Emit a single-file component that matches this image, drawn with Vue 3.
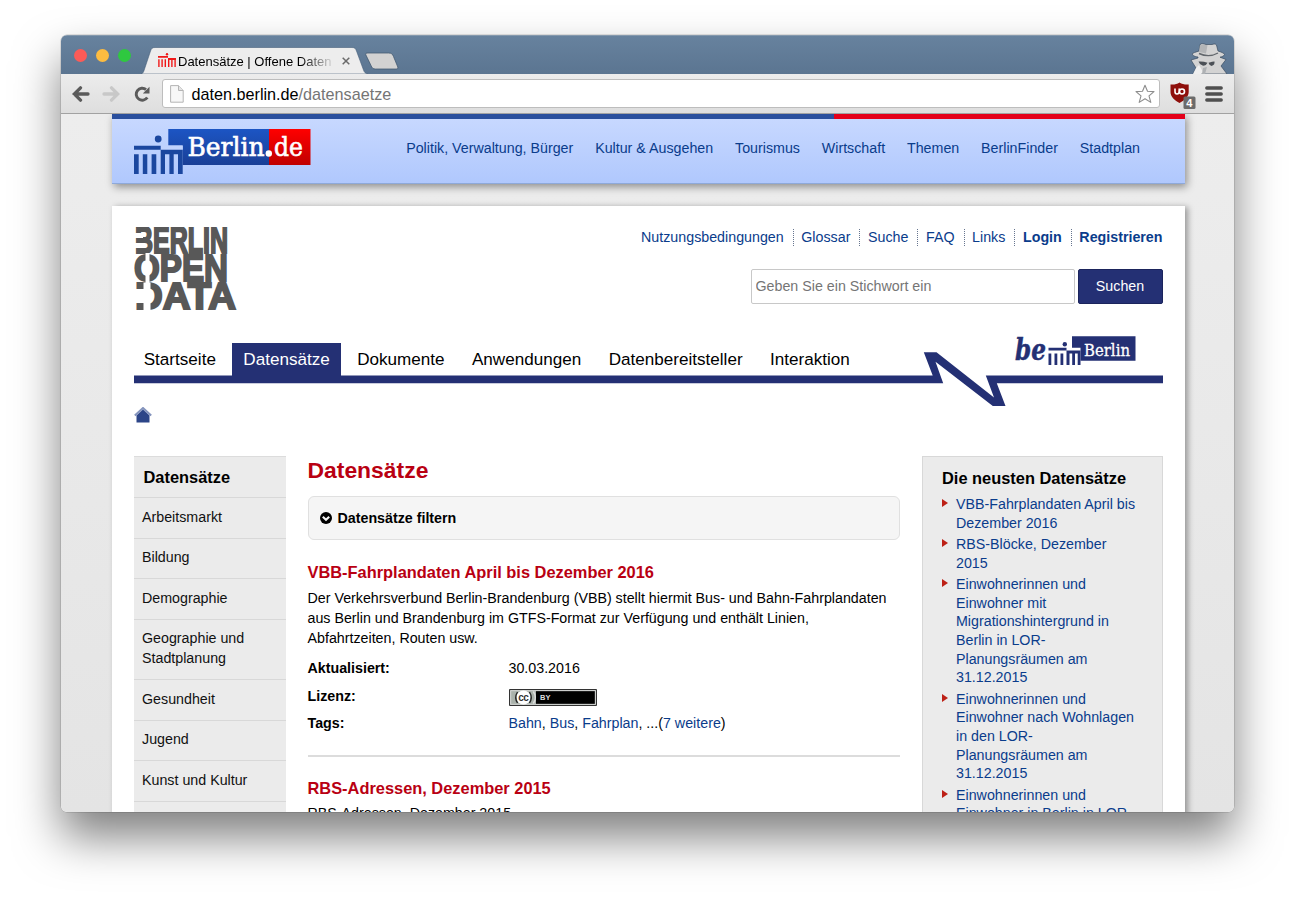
<script setup>
import { ref } from 'vue';

const query = ref('');
const activeTab = ref('Datensätze');

const portalLinks = [
  'Politik, Verwaltung, Bürger',
  'Kultur & Ausgehen',
  'Tourismus',
  'Wirtschaft',
  'Themen',
  'BerlinFinder',
  'Stadtplan'
];

const metaLinks = [
  { label: 'Nutzungsbedingungen' },
  { label: 'Glossar' },
  { label: 'Suche' },
  { label: 'FAQ' },
  { label: 'Links' },
  { label: 'Login', strong: true },
  { label: 'Registrieren', strong: true }
];

const tabs = ['Startseite', 'Datensätze', 'Dokumente', 'Anwendungen', 'Datenbereitsteller', 'Interaktion'];

const categories = [
  'Arbeitsmarkt',
  'Bildung',
  'Demographie',
  'Geographie und Stadtplanung',
  'Gesundheit',
  'Jugend',
  'Kunst und Kultur',
  'Öffentliche Verwaltung'
];

const newest = [
  'VBB-Fahrplandaten April bis Dezember 2016',
  'RBS-Blöcke, Dezember 2015',
  'Einwohnerinnen und Einwohner mit Migrationshintergrund in Berlin in LOR-Planungsräumen am 31.12.2015',
  'Einwohnerinnen und Einwohner nach Wohnlagen in den LOR-Planungsräumen am 31.12.2015',
  'Einwohnerinnen und Einwohner in Berlin in LOR-Planungsräumen am 31.12.2015'
];
</script>

<template>
  <div class="desktop">
    <div class="window">
      <div class="titlebar">
        <div class="lights">
          <span class="light red"></span>
          <span class="light yellow"></span>
          <span class="light green"></span>
        </div>
        <div class="tab">
          <svg class="tab-shape" width="228" height="27" viewBox="0 0 228 27">
            <path d="M0 27 C2 26.5 2.5 25 3.2 23 L9.5 4 C10.5 1.2 11.5 .5 14 .5 H211 C213.5 .5 214.5 1.2 215.5 4 L222.5 23 C223.3 25.5 224.5 26.5 227 27 Z" fill="#ededed" stroke="#47607a" stroke-width=".6" />
          </svg>
          <svg class="favicon" width="18" height="15" viewBox="0 0 18 15" fill="#f01818">
            <circle cx="9" cy="1.3" r="1.2" />
            <path d="M0 3h10v1.700H0zM10 5h8v2h-8zM.2 6.200h1.400V14H.2zM3.400 6.200h1.400V14H3.400zM6.600 6.200H8V14H6.600zM10 6h1.400v8H10zM13.200 6h1.400v8h-1.400zM16.400 6h1.400v8h-1.400z" />
          </svg>
          <span class="tab-title">Datensätze | Offene Daten | B</span>
          <svg class="tab-close" width="8" height="8" viewBox="0 0 8 8">
            <path d="M.7.7l6.600 6.600M7.300.7L.7 7.300" stroke="#6a6a6a" stroke-width="1.5" />
          </svg>
        </div>
        <svg class="new-tab" width="36" height="18" viewBox="0 0 36 18">
          <path d="M4 1 H24.5 C27.5 1 28.5 2 29.5 4.5 L33.8 15 C34.2 16.5 33.5 17 32 17 H11.5 C9 17 8 16 7 13.5 L1.8 2.8 C1.3 1.5 2 1 4 1 Z" fill="#d2d2d2" stroke="#445a72" stroke-width=".8" />
        </svg>
        <svg class="incognito" width="38" height="31" viewBox="0 0 38 31">
          <path d="M3 31 L6 25 L1 17 L8 15 V14 C4 13.5 2 12 2.5 10.5 C5 9 8 8.5 9 8 L10 1.5 C12 0 14 1 16 1.5 H22 C24 .8 25.5 .7 26.5 2 L28 8 C31 9 34 10 34.5 11.5 C34 13 32 13.8 30 14.2 L36 16.5 L31 23 L37 31 Z" fill="#d3d3d3" stroke="#394c60" stroke-width=".7" />
          <path d="M10 2 L9 9 L16 10.5 L17.500 2Z" fill="#b3b5b7" />
          <path d="M9 10.500 Q19 15 28 10" fill="none" stroke="#62676c" stroke-width="1.4" />
          <path d="M8.500 18.500 Q13 18 17.500 19.800 Q16 23.300 12.500 22.500 Q9.500 21.500 8.500 18.500ZM18.500 19.800 Q24 18 24.500 18.500 Q25 22 21.500 23 Q19 22 18.500 19.800Z" fill="#4b5056" />
          <path d="M6 25 L9 22 L13 29 L11 31 H3Z" fill="#efefef" />
          <path d="M13 25 L17 24 L15 31 H12Z" fill="#aeb1b4" />
        </svg>
      </div>

      <div class="toolbar">
        <svg width="18" height="16" viewBox="0 0 18 16" class="nav-icon">
          <path d="M8.500 1.800 L2.300 8 L8.500 14.200 M2.500 8 H16" fill="none" stroke="#5b5b5b" stroke-width="3.3" stroke-linecap="round" />
        </svg>
        <svg width="18" height="16" viewBox="0 0 18 16" class="nav-icon forward">
          <path d="M9.500 1.800 L15.700 8 L9.500 14.200 M15.500 8 H2" fill="none" stroke="#c8c8c8" stroke-width="3.3" stroke-linecap="round" />
        </svg>
        <svg width="17" height="16" viewBox="0 0 17 16" class="nav-icon reload">
          <path d="M13.300 11.500 A6 6 0 1 1 12 3.500" fill="none" stroke="#5b5b5b" stroke-width="2.9" />
          <path d="M15.500 .8 V7.500 H8.800 Z" fill="#5b5b5b" />
        </svg>
        <div class="omnibox">
          <svg width="14" height="18" viewBox="0 0 14 18">
            <path d="M.6.6 H8.500 L13.200 5.500 V17.200 H.6 Z" fill="#f7f7f7" stroke="#b4b4b4" />
            <path d="M8.500.6 V5.500 H13.200" fill="#e4e4e4" stroke="#b4b4b4" />
          </svg>
          <span class="url">daten.berlin.de<span class="path">/datensaetze</span></span>
          <svg class="star" width="20" height="20" viewBox="0 0 20 20">
            <path d="M10 1.200 L12.500 7.300 L19 7.600 L14 11.900 L15.800 18.400 L10 14.800 L4.200 18.400 L6 11.900 L1 7.600 L7.500 7.300 Z" fill="#fff" stroke="#8d8d8d" stroke-width="1.1" stroke-linejoin="round" />
          </svg>
        </div>
        <svg class="ublock" width="27" height="28" viewBox="0 0 27 28">
          <path d="M9.500 .5 C12 2.300 15.500 2.800 18.700 2.500 V10 C18.700 15 14 18.500 9.500 21 C5 18.500 .5 15 .5 10 V2.500 C4 2.800 7 2.300 9.500 .5Z" fill="#8e0f0b" />
          <path d="M5 6.500 V9.500 Q5 12 7 12 Q9.200 12 9.200 9.500 V6.500" fill="none" stroke="#fff" stroke-width="1.6" />
          <circle cx="12" cy="9.500" r="2.500" fill="none" stroke="#fff" stroke-width="1.6" />
          <rect x="13.500" y="14.500" width="12" height="12.500" rx="1.5" fill="#6b6b6b" />
          <text x="16.300" y="24.800" class="badge-text">4</text>
        </svg>
        <svg class="menu" width="18" height="16" viewBox="0 0 18 16">
          <path d="M1.800 2h14.400M1.800 8h14.400M1.800 14h14.400" stroke="#4f4f4f" stroke-width="3.4" stroke-linecap="round" />
        </svg>
      </div>

      <div class="page">
        <header class="portal">
          <svg class="berlin-logo" width="178" height="47" viewBox="0 0 178 47">
            <defs>
              <linearGradient id="logoBlue" x1="0" y1="0" x2="0" y2="1">
                <stop offset="0" stop-color="#1c55c4" />
                <stop offset="1" stop-color="#1a3f96" />
              </linearGradient>
              <linearGradient id="logoRed" x1="0" y1="0" x2="0" y2="1">
                <stop offset="0" stop-color="#ff0000" />
                <stop offset="1" stop-color="#c00000" />
              </linearGradient>
            </defs>
            <path d="M34.300 1H135.300V37H48.700V17.500H34.300Z" fill="url(#logoBlue)" />
            <rect x="135" y="1" width="41.500" height="36" fill="url(#logoRed)" />
            <path d="M27 17.500h21.700v4.300H27z" fill="#c0d2fd" />
            <g fill="#1b479f">
              <circle cx="24.200" cy="11" r="3.400" />
              <path d="M0 17.700h26.700v4H0zM0 26.300h4.700V46H0zM8.800 26.300h4.500V46H8.800zM17.600 26.300h4.700V46h-4.700zM26.700 21.800h22V46H44V26.300h-4.300V46h-4.300V26.300h-4.400V46h-4.300z" />
            </g>
            <text x="53.500" y="27.500" class="slab" textLength="77" lengthAdjust="spacingAndGlyphs">Berlin</text>
            <circle cx="134.800" cy="25.500" r="3.200" fill="#fff" />
            <text x="140" y="27.500" class="slab" textLength="29" lengthAdjust="spacingAndGlyphs">de</text>
          </svg>
          <nav class="portal-nav">
            <a v-for="link in portalLinks" :key="link">{{ link }}</a>
          </nav>
        </header>

        <div class="sheet">
          <div class="top">
            <svg class="open-data" width="104" height="84" viewBox="0 0 104 84">
              <g class="block-type">
                <text x="1" y="26" textLength="93" lengthAdjust="spacingAndGlyphs">BERLIN</text>
                <text x="0" y="54" textLength="94" lengthAdjust="spacingAndGlyphs">OPEN</text>
                <text x="1" y="82" textLength="101" lengthAdjust="spacingAndGlyphs">DATA</text>
              </g>
              <path d="M0 6h9v5H0zM0 16h9v5H0zM11.500 26h4v9h-4zM11.500 46h4v10h-4zM0 62h10v14H0zM9.500 55.500h7V84h-7z" fill="#fff" />
            </svg>
            <div class="tools">
              <ul class="meta-links">
                <li v-for="link in metaLinks" :key="link.label" :class="{ strong: link.strong }">{{ link.label }}</li>
              </ul>
              <form class="search" @submit.prevent>
                <input v-model="query" type="text" placeholder="Geben Sie ein Stichwort ein">
                <button type="submit">Suchen</button>
              </form>
            </div>
          </div>

          <div class="main-nav">
            <svg class="nav-line" width="1029" height="72" viewBox="0 0 1029 72">
              <path d="M0 39.500 H798.700 L789.800 16.300 H802.500 L860 61.500 L851.800 39.500 H1029 V47.200 H862.800 L871.500 70 H858.800 L801.500 25.700 L809.200 47.200 H0 Z" fill="#243074" />
              <text x="881" y="24" class="be" textLength="31" lengthAdjust="spacingAndGlyphs">be</text>
              <g fill="#243074">
                <path d="M938 .3h63.500v24.500H946.500V11.800H938z" />
                <circle cx="930.800" cy="8.200" r="2.200" />
                <path d="M914.500 11.800h18v2.600h-18zM914.500 17.500h2.800V29h-2.800zM920.500 17.500h2.800V29h-2.800zM926.500 17.500h2.800V29h-2.800zM932.500 14.400h14V29h-2.800V17.500H941V29h-2.800V17.500h-2.700V29h-3z" />
              </g>
              <text x="950" y="19.500" class="slab small" textLength="46" lengthAdjust="spacingAndGlyphs">Berlin</text>
            </svg>
            <nav class="tabs">
              <a v-for="tab in tabs" :key="tab" :class="{ active: tab === activeTab }" @click="activeTab = tab">{{ tab }}</a>
            </nav>
          </div>

          <svg class="home" width="18" height="16" viewBox="0 0 18 16">
            <path d="M.8 8.500 L9 1 L17.200 8.500" fill="none" stroke="#8494bd" stroke-width="2" />
            <path d="M2.500 8.500 L9 2.500 L15.500 8.500 V15.500 H2.500 Z" fill="#2c4588" />
          </svg>

          <div class="columns">
            <aside class="categories">
              <h2>Datensätze</h2>
              <a v-for="category in categories" :key="category">{{ category }}</a>
            </aside>

            <main class="datasets">
              <h1>Datensätze</h1>
              <div class="filter">
                <svg width="12" height="12" viewBox="0 0 12 12">
                  <circle cx="6" cy="6" r="6" fill="#000" />
                  <path d="M2.800 4.700 L6 7.800 L9.200 4.700" fill="none" stroke="#f5f5f5" stroke-width="2.1" />
                </svg>
                <span>Datensätze filtern</span>
              </div>
              <article>
                <h3>VBB-Fahrplandaten April bis Dezember 2016</h3>
                <p>Der Verkehrsverbund Berlin-Brandenburg (VBB) stellt hiermit Bus- und Bahn-Fahrplandaten aus Berlin und Brandenburg im GTFS-Format zur Verfügung und enthält Linien, Abfahrtzeiten, Routen usw.</p>
                <dl>
                  <dt>Aktualisiert:</dt>
                  <dd>30.03.2016</dd>
                  <dt>Lizenz:</dt>
                  <dd>
                    <svg class="license" width="88" height="17" viewBox="0 0 88 17">
                      <path d="M.5.500h87v16H.5z" fill="#aab2ab" stroke="#333" />
                      <path d="M27 2h59v13H27z" fill="#000" />
                      <path d="M1.700 1.700h84.600v13.600H1.700z" fill="none" stroke="#ddd" stroke-width=".8" />
                      <circle cx="14.500" cy="8.500" r="7" fill="#fff" />
                      <path d="M8.500 3 Q5 8.500 8.500 14M20.500 3 Q24 8.500 20.500 14" fill="none" stroke="#222" stroke-width="1.3" />
                      <path d="M24.300 2.500 Q28.500 8.500 24.300 14.500" fill="none" stroke="#ddd" stroke-width="1.5" />
                      <text x="9.200" y="11.600" class="cc">cc</text>
                      <text x="31" y="11.300" class="by">BY</text>
                    </svg>
                  </dd>
                  <dt>Tags:</dt>
                  <dd><a>Bahn</a>, <a>Bus</a>, <a>Fahrplan</a>, ...(<a>7 weitere</a>)</dd>
                </dl>
              </article>
              <article>
                <h3>RBS-Adressen, Dezember 2015</h3>
                <p>RBS-Adressen, Dezember 2015</p>
              </article>
            </main>

            <aside class="newest">
              <h2>Die neusten Datensätze</h2>
              <ul>
                <li v-for="item in newest" :key="item">{{ item }}</li>
              </ul>
            </aside>
          </div>
        </div>
      </div>
    </div>
  </div>
</template>

<style>
body {
  margin: 0;
  background: #fff;
}
</style>

<style scoped>
* {
  box-sizing: border-box;
}

.desktop {
  width: 1295px;
  height: 900px;
  padding: 35px 61px;
  overflow: hidden;
  font-family: "Liberation Sans", Arial, sans-serif;
  font-size: 14.25px;
  color: #000;
}

.window {
  display: flex;
  flex-direction: column;
  width: 1173px;
  height: 777px;
  overflow: hidden;
  border-radius: 6px;
  box-shadow: 0 0 0 .5px rgba(0, 0, 0, .2), 0 25px 46px rgba(0, 0, 0, .5);
}

svg {
  display: block;
  flex: none;
}

/* Browser chrome */
.titlebar {
  display: flex;
  flex: none;
  align-items: flex-end;
  height: 39px;
  background: linear-gradient(#67829e, #5b7591);
  border-top: 1px solid #8599ad;
}

.lights {
  display: flex;
  gap: 9px;
  width: 80px;
  padding: 0 0 12px 13px;
}

.light {
  width: 13px;
  height: 13px;
  border-radius: 50%;
}

.red {
  background: #fc5b57;
}

.yellow {
  background: #fdbc40;
}

.green {
  background: #2fc840;
}

.tab {
  position: relative;
  display: flex;
  align-items: center;
  width: 228px;
  height: 27px;
  padding-left: 17px;
}

.tab-shape {
  position: absolute;
  left: 0;
  top: 0;
}

.favicon,
.tab-title,
.tab-close {
  position: relative;
}

.tab-title {
  width: 158px;
  margin-left: 2px;
  padding-top: 1px;
  overflow: hidden;
  white-space: nowrap;
  font-size: 13px;
  mask-image: linear-gradient(90deg, #000 122px, transparent);
}

.tab-close {
  margin-left: 6px;
}

.new-tab {
  margin: 0 0 4px -5px;
}

.incognito {
  margin: 0 6px 0 auto;
}

.toolbar {
  display: flex;
  flex: none;
  align-items: center;
  height: 40px;
  padding-left: 11px;
  background: linear-gradient(#ececec, #dedede);
  border-bottom: 1px solid #a2a2a2;
}

.forward {
  margin-left: 12px;
}

.reload {
  margin-left: 14px;
}

.omnibox {
  display: flex;
  align-items: center;
  width: 998px;
  height: 29px;
  margin-left: 11px;
  padding: 0 4px 0 7px;
  background: #fff;
  border: 1px solid #bdbdbd;
  border-radius: 3px;
}

.url {
  margin-left: 7.5px;
  padding-top: 1px;
  font-size: 16.2px;
}

.path {
  color: #757575;
}

.star {
  margin-left: auto;
}

.ublock {
  margin: 5px 0 0 10px;
}

.badge-text {
  font-size: 11px;
  font-weight: bold;
  fill: #fff;
}

.menu {
  margin-left: 8px;
}

/* Portal header */
.page {
  flex: 1;
  min-height: 0;
  padding: 0 49.5px 0 50.5px;
  overflow: hidden;
  background: linear-gradient(#ededed, #e4e4e4);
}

.portal {
  position: relative;
  display: flex;
  align-items: flex-start;
  height: 70px;
  padding: 14px 44.5px 0 22px;
  background: linear-gradient(90deg, #2a4f9d 722px, #e4001a 722px) top / 100% 5px no-repeat, linear-gradient(#c9d9ff, #b0c8fd);
  border-bottom: 1px solid #8ea9da;
  box-shadow: 2px 3px 8px rgba(0, 0, 0, .4);
}

.slab {
  font-family: "DejaVu Serif", serif;
  font-size: 26px;
  fill: #fff;
  stroke: #fff;
  stroke-width: .6px;
}

.slab.small {
  font-size: 17px;
  stroke-width: .3px;
}

.be {
  font-family: "DejaVu Serif", serif;
  font-size: 30px;
  font-style: italic;
  font-weight: bold;
  fill: #243074;
  stroke: #243074;
  stroke-width: .5px;
}

.portal-nav {
  display: flex;
  flex: 1;
  justify-content: flex-end;
  gap: 21.85px;
  padding-top: 12px;
  line-height: 17px;
  white-space: nowrap;
  color: #0a3c8b;
}

/* Sheet */
.sheet {
  height: 640px;
  margin-top: 22px;
  padding: 21px 22px 0;
  background: #fff;
  box-shadow: 3px 1px 6px rgba(0, 0, 0, .35);
}

.top {
  display: flex;
  justify-content: space-between;
  height: 109px;
}

.block-type {
  font-size: 36px;
  font-weight: bold;
  fill: #585858;
  stroke: #585858;
  stroke-width: 2px;
}

.meta-links {
  display: flex;
  justify-content: flex-end;
  margin: 2px 0 0;
  padding: 0;
  list-style: none;
  line-height: 17px;
  color: #0a3c8b;
}

.meta-links li + li {
  margin-left: 9px;
  padding-left: 7.6px;
  border-left: 1px dotted #66758f;
}

.strong {
  font-weight: bold;
}

.search {
  display: flex;
  justify-content: flex-end;
  gap: 3px;
  margin-top: 23px;
}

.search input {
  width: 324px;
  height: 35px;
  padding: 0 4px 1px;
  border: 1px solid #c8c8c8;
  border-radius: 2px;
  font: inherit;
}

.search input::placeholder {
  color: #757575;
}

.search button {
  width: 85px;
  height: 35px;
  padding: 0 0 1px;
  color: #fff;
  background: #243074;
  border: 1px solid #1b245c;
  border-radius: 2px;
  font: inherit;
}

.main-nav {
  position: relative;
  height: 71px;
}

.nav-line {
  position: absolute;
  left: 0;
  top: 0;
}

.tabs {
  position: relative;
  display: flex;
  gap: 5px;
  padding-top: 7px;
  margin-left: -1px;
  font-size: 17.1px;
}

.tabs a {
  height: 40px;
  padding: 0 11.2px;
  line-height: 34px;
}

.tabs .active {
  color: #fff;
  background: #243074;
}

.columns {
  display: grid;
  grid-template-columns: 152px 592px 241px;
  column-gap: 22px;
  margin-top: 33px;
}

/* Sidebar */
.categories {
  height: 400px;
  background: #ebebeb;
  border-top: 1px solid #dcdcdc;
}

h1,
h2,
h3,
p {
  margin: 0;
}

h2 {
  font-size: 16.4px;
}

.categories h2 {
  height: 40px;
  padding-left: 10px;
  line-height: 40px;
}

.categories a {
  display: block;
  padding: 9.85px 30px 9.85px 8.5px;
  border-top: 1px solid #d8d8d8;
  line-height: 19.85px;
  color: #111;
}

/* Dataset list */
h1 {
  font-size: 22.9px;
  line-height: 28px;
  color: #b90012;
}

.filter {
  display: flex;
  align-items: center;
  gap: 6px;
  height: 44px;
  margin-top: 12px;
  padding-left: 11px;
  background: #f5f5f5;
  border: 1px solid #e0e0e0;
  border-radius: 6px;
  font-weight: bold;
}

article {
  padding-top: 22px;
}

article + article {
  padding-top: 21px;
  border-top: 2px solid #dcdcdc;
}

h3 {
  font-size: 16.4px;
  line-height: 20px;
  color: #b90012;
}

article p {
  margin-top: 7px;
  line-height: 19.8px;
}

article + article p {
  margin-top: 6px;
}

dl {
  display: grid;
  grid-template-columns: 201px 1fr;
  margin: 7px 0 17px;
  line-height: 27.4px;
}

dt {
  font-weight: bold;
}

dd {
  margin: 0;
}

dd a {
  color: #0a3c8b;
}

.license {
  margin-top: 6px;
}

.cc {
  font-size: 10px;
  font-weight: bold;
  letter-spacing: -.5px;
  fill: #333;
}

.by {
  font-size: 7.5px;
  font-weight: bold;
  fill: #ddd;
}

/* Newest datasets */
.newest {
  height: 400px;
  padding: 11px 22px 0 19.5px;
  background: #ebebeb;
  border: 1px solid #d8d8d8;
}

.newest h2 {
  line-height: 20px;
}

.newest ul {
  display: flex;
  flex-direction: column;
  gap: 2.7px;
  margin: 7px 0 0;
  padding: 0;
  list-style: none;
  line-height: 18.65px;
  color: #0a3c8b;
}

.newest li {
  position: relative;
  padding-left: 14px;
}

.newest li::before {
  content: "";
  position: absolute;
  left: 0;
  top: 4px;
  border: 4px solid transparent;
  border-left: 6px solid #bd2016;
  border-right: 0;
}
</style>
